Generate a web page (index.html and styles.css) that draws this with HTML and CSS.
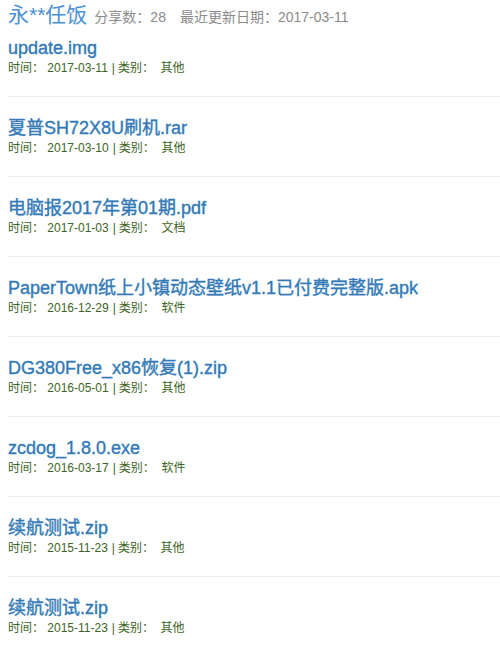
FILE: index.html
```html
<!DOCTYPE html>
<html>
<head>
<meta charset="utf-8">
<link rel="stylesheet" href="styles.css">
</head>
<body>
<div class="header"><span class="user">永**任饭</span><span class="stat">分享数：28</span><span class="stat">最近更新日期：2017-03-11</span></div>
<ul class="list">
<li class="item first"><h4 class="title">update.img</h4><p class="meta">时间： 2017-03-11<span class="sep">|</span>类别：&nbsp; 其他</p></li>
<li class="item"><h4 class="title">夏普SH72X8U刷机.rar</h4><p class="meta">时间： 2017-03-10<span class="sep">|</span>类别：&nbsp; 其他</p></li>
<li class="item"><h4 class="title">电脑报2017年第01期.pdf</h4><p class="meta">时间： 2017-01-03<span class="sep">|</span>类别：&nbsp; 文档</p></li>
<li class="item"><h4 class="title">PaperTown纸上小镇动态壁纸v1.1已付费完整版.apk</h4><p class="meta">时间： 2016-12-29<span class="sep">|</span>类别：&nbsp; 软件</p></li>
<li class="item"><h4 class="title">DG380Free_x86恢复(1).zip</h4><p class="meta">时间： 2016-05-01<span class="sep">|</span>类别：&nbsp; 其他</p></li>
<li class="item"><h4 class="title">zcdog_1.8.0.exe</h4><p class="meta">时间： 2016-03-17<span class="sep">|</span>类别：&nbsp; 软件</p></li>
<li class="item"><h4 class="title">续航测试.zip</h4><p class="meta">时间： 2015-11-23<span class="sep">|</span>类别：&nbsp; 其他</p></li>
<li class="item"><h4 class="title">续航测试.zip</h4><p class="meta">时间： 2015-11-23<span class="sep">|</span>类别：&nbsp; 其他</p></li>
</ul>
</body>
</html>
```
FILE: styles.css
```css
html, body {
  margin: 0;
  padding: 0;
  background: #fff;
}
body {
  padding-left: 8px;
  font-family: "Liberation Sans", "Noto Sans CJK SC", sans-serif;
  overflow: hidden;
}
.header {
  height: 30px;
  line-height: 30px;
  white-space: nowrap;
}
.user {
  font-size: 21px;
  color: #4a90d6;
}
.stat {
  font-size: 14px;
  color: #8a8a8a;
  margin-left: 7px;
}
.stat + .stat {
  margin-left: 14px;
}
.list {
  list-style: none;
  margin: 0;
  padding: 0;
}
.item {
  padding: 20px 0 19px;
  border-top: 1px solid #eee;
}
.item.first {
  padding-top: 7px;
  border-top: none;
}
.title {
  margin: 0;
  font-size: 18px;
  font-weight: normal;
  line-height: 22px;
  color: #337ab7;
  white-space: nowrap;
  -webkit-text-stroke: 0.4px #337ab7;
}
.meta {
  margin: 1px 0 0;
  font-size: 12px;
  line-height: 17px;
  color: #3d6424;
}
.sep {
  margin: 0 3px 0 4px;
}
```
